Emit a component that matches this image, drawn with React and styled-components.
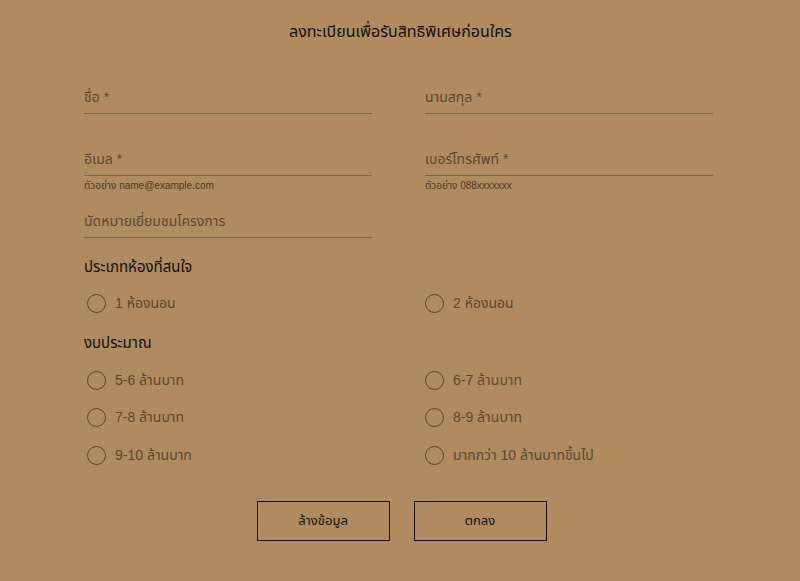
import React from "react";
import styled, { createGlobalStyle } from "styled-components";

const Global = createGlobalStyle`
  html, body { margin: 0; padding: 0; background: #b08b5f; }
  body { font-family: "Liberation Sans", "Noto Sans Thai", sans-serif; }
  * { box-sizing: border-box; }
`;

const Page = styled.div`
  width: 800px;
  min-height: 581px;
  background: #b08b5f;
  padding-top: 22px;
`;

const Form = styled.form`
  width: 629px;
  margin-left: 84px;
  display: flex;
  flex-direction: column;
`;

const Title = styled.h1`
  margin: 0 0 0 4px;
  height: 20px;
  line-height: 20px;
  font-size: 16px;
  font-weight: 400;
  color: #111;
  text-align: center;
`;

const FieldGrid = styled.div`
  margin-top: 41px;
  display: grid;
  grid-template-columns: 288px 288px;
  column-gap: 53px;
  grid-template-rows: 62px 62px 31px;
`;

const Field = styled.div`
  display: flex;
  flex-direction: column;
`;

const Input = styled.input`
  height: 31px;
  width: 100%;
  border: none;
  border-bottom: 1px solid #7d6245;
  background: transparent;
  padding: 0 0 2px 0;
  font-family: inherit;
  font-size: 14px;
  color: #3d2f20;
  outline: none;
  &::placeholder { color: #5c4832; opacity: 1; }
`;

const Hint = styled.div`
  margin-top: 4px;
  font-size: 10px;
  line-height: 12px;
  color: #4a3a29;
`;

const SectionTitle = styled.h2`
  margin: ${(p) => p.$top}px 0 0 0;
  height: 20px;
  line-height: 20px;
  font-size: 15px;
  font-weight: 400;
  color: #111;
`;

const RadioGrid = styled.div`
  margin-top: ${(p) => p.$top}px;
  display: grid;
  grid-template-columns: 338px 288px;
  row-gap: 15.5px;
  padding-left: 3px;
`;

const RadioLabel = styled.label`
  display: flex;
  align-items: center;
  gap: 9px;
  height: 22px;
  font-size: 14px;
  color: #5c4832;
  cursor: pointer;
`;

const Circle = styled.input.attrs({ type: "radio" })`
  appearance: none;
  margin: 0;
  width: 19px;
  height: 19px;
  border-radius: 50%;
  border: 1.5px solid #5a4530;
  background: transparent;
  flex: none;
`;

const Buttons = styled.div`
  margin-top: 35px;
  display: flex;
  justify-content: center;
  gap: 24px;
  padding-left: 6px;
`;

const Button = styled.button`
  width: 133px;
  height: 40px;
  background: transparent;
  border: 1px solid #111;
  font-family: inherit;
  font-size: 13px;
  color: #111;
  cursor: pointer;
`;

const Radio = ({ name, label }) => (
  <RadioLabel>
    <Circle name={name} />
    <span>{label}</span>
  </RadioLabel>
);

export default function App() {
  return (
    <Page>
      <Global />
      <Form onSubmit={(e) => e.preventDefault()}>
        <Title>ลงทะเบียนเพื่อรับสิทธิพิเศษก่อนใคร</Title>
        <FieldGrid>
          <Field><Input placeholder="ชื่อ *" /></Field>
          <Field><Input placeholder="นามสกุล *" /></Field>
          <Field>
            <Input placeholder="อีเมล *" />
            <Hint>ตัวอย่าง name@example.com</Hint>
          </Field>
          <Field>
            <Input placeholder="เบอร์โทรศัพท์ *" />
            <Hint>ตัวอย่าง 088xxxxxxx</Hint>
          </Field>
          <Field><Input placeholder="นัดหมายเยี่ยมชมโครงการ" /></Field>
        </FieldGrid>

        <SectionTitle $top={19}>ประเภทห้องที่สนใจ</SectionTitle>
        <RadioGrid $top={15}>
          <Radio name="room" label="1 ห้องนอน" />
          <Radio name="room" label="2 ห้องนอน" />
        </RadioGrid>

        <SectionTitle $top={19}>งบประมาณ</SectionTitle>
        <RadioGrid $top={16}>
          <Radio name="budget" label="5-6 ล้านบาท" />
          <Radio name="budget" label="6-7 ล้านบาท" />
          <Radio name="budget" label="7-8 ล้านบาท" />
          <Radio name="budget" label="8-9 ล้านบาท" />
          <Radio name="budget" label="9-10 ล้านบาท" />
          <Radio name="budget" label="มากกว่า 10 ล้านบาทขึ้นไป" />
        </RadioGrid>

        <Buttons>
          <Button type="reset">ล้างข้อมูล</Button>
          <Button type="submit">ตกลง</Button>
        </Buttons>
      </Form>
    </Page>
  );
}
